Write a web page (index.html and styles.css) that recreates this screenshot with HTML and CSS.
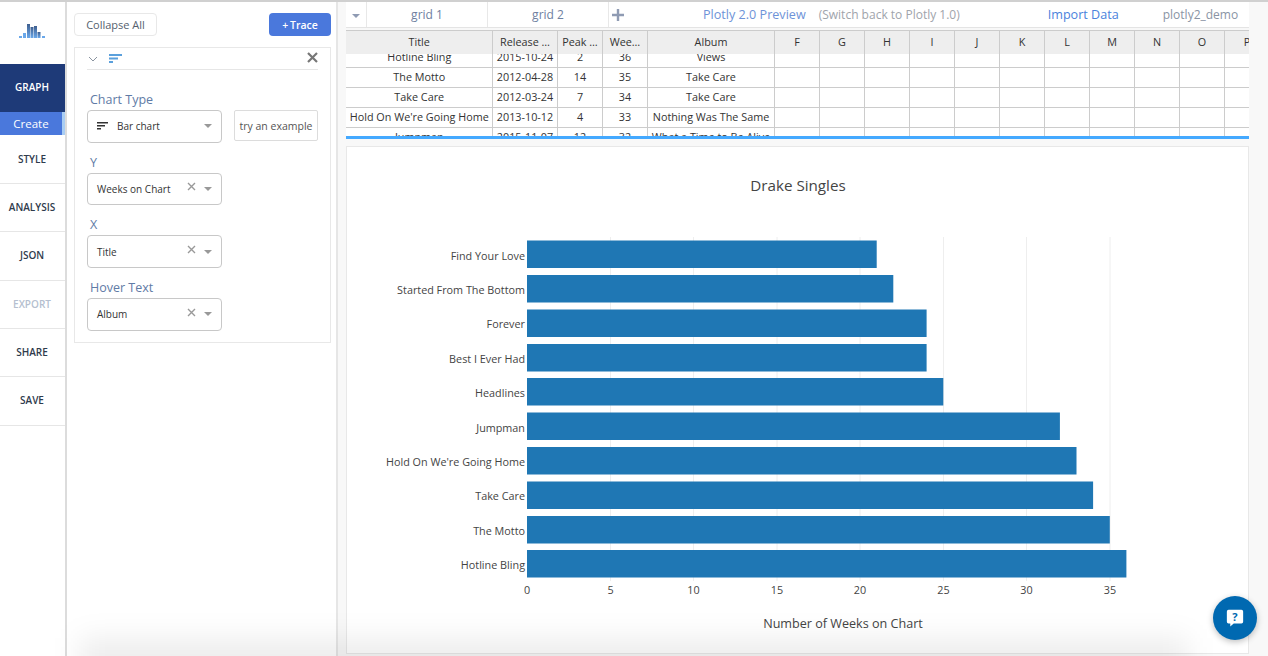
FILE: index.html
```html
<!DOCTYPE html>
<html lang="en">
<head>
<meta charset="utf-8">
<title>Plotly</title>
<link rel="stylesheet" href="styles.css">
</head>
<body>
<div class="app">
  <nav class="nav">
    <div class="logo">
      <svg width="30" height="20" viewBox="0 0 30 20">
        <defs><linearGradient id="lg" x1="0" y1="0" x2="0" y2="1"><stop offset="0" stop-color="#3f5f8f"/><stop offset="1" stop-color="#6aa8ea"/></linearGradient></defs>
        <rect x="3" y="15" width="3" height="2" fill="#6aa8ea"/>
        <rect x="7" y="12" width="3" height="5" fill="#6aa8ea"/>
        <rect x="11" y="3" width="3" height="14" fill="url(#lg)"/>
        <rect x="14.500" y="6" width="3" height="11" fill="url(#lg)"/>
        <rect x="18" y="5" width="3" height="12" fill="url(#lg)"/>
        <rect x="21.500" y="11" width="3" height="6" fill="url(#lg)"/>
        <rect x="26" y="15" width="3" height="2" fill="#6aa8ea"/>
      </svg>
    </div>
    <div class="nav-item nav-active">GRAPH</div>
    <div class="nav-sub">Create</div>
    <div class="nav-item nav-tall nav-first">STYLE</div>
    <div class="nav-item">ANALYSIS</div>
    <div class="nav-item nav-tall">JSON</div>
    <div class="nav-item nav-muted">EXPORT</div>
    <div class="nav-item">SHARE</div>
    <div class="nav-item nav-tall">SAVE</div>
  </nav>

  <aside class="panel">
    <div class="panel-top">
      <button class="btn-plain">Collapse All</button>
      <button class="btn-blue">+ Trace</button>
    </div>
    <section class="card">
      <div class="card-head">
        <svg class="chev" width="10" height="6" viewBox="0 0 10 6"><path d="M1 1l4 4 4-4" fill="none" stroke="#8a94a0" stroke-width="1"/></svg>
        <svg class="trace-icon" width="14" height="10" viewBox="0 0 14 10">
          <rect x="0" y="0" width="13" height="2" fill="#5ba0dc"/>
          <rect x="0" y="3.500" width="9" height="2" fill="#5ba0dc"/>
          <rect x="0" y="7" width="4" height="2" fill="#5ba0dc"/>
        </svg>
        <svg class="close" width="11" height="11" viewBox="0 0 11 11"><path d="M1 1l9 9M10 1l-9 9" stroke="#777" stroke-width="2.200"/></svg>
      </div>
      <div class="label">Chart Type</div>
      <div class="type-row">
        <div class="select">
          <svg class="bar-icon" width="11" height="8" viewBox="0 0 11 8">
            <rect x="0" y="0" width="11" height="1.500" fill="#333"/>
            <rect x="0" y="3" width="8" height="1.500" fill="#333"/>
            <rect x="0" y="6" width="4" height="1.500" fill="#333"/>
          </svg>
          <span class="select-text">Bar chart</span>
          <span class="caret"></span>
        </div>
        <div class="try">try an example</div>
      </div>
      <div class="label">Y</div>
      <div class="select">
        <span class="select-text">Weeks on Chart</span>
        <svg class="clear" width="9" height="9" viewBox="0 0 9 9"><path d="M1 1l7 7M8 1l-7 7" stroke="#999" stroke-width="1.400"/></svg>
        <span class="caret"></span>
      </div>
      <div class="label">X</div>
      <div class="select">
        <span class="select-text">Title</span>
        <svg class="clear" width="9" height="9" viewBox="0 0 9 9"><path d="M1 1l7 7M8 1l-7 7" stroke="#999" stroke-width="1.400"/></svg>
        <span class="caret"></span>
      </div>
      <div class="label">Hover Text</div>
      <div class="select">
        <span class="select-text">Album</span>
        <svg class="clear" width="9" height="9" viewBox="0 0 9 9"><path d="M1 1l7 7M8 1l-7 7" stroke="#999" stroke-width="1.400"/></svg>
        <span class="caret"></span>
      </div>
    </section>
  </aside>

  <main class="main">
    <header class="tabs">
      <div class="tab-menu"><span class="tab-caret"></span></div>
      <div class="tab">grid 1</div>
      <div class="tab">grid 2</div>
      <div class="tab-plus">
        <svg width="14" height="14" viewBox="0 0 14 14"><path d="M7 1v12M1 7h12" stroke="#8f9bb3" stroke-width="2.400"/></svg>
      </div>
      <a class="preview">Plotly 2.0 Preview</a>
      <span class="switch">(Switch back to Plotly 1.0)</span>
      <a class="import">Import Data</a>
      <span class="user">plotly2_demo</span>
    </header>

    <div class="sheet">
      <div class="sheet-clip">
        <table class="grid grid-body">
          <colgroup><col class="c1"><col class="c2"><col class="c3"><col class="c3"><col class="c5"><col class="c3"><col class="c3"><col class="c3"><col class="c3"><col class="c3"><col class="c3"><col class="c3"><col class="c3"><col class="c3"><col class="c3"><col class="c3"></colgroup>
          <tr><td>Hotline Bling</td><td>2015-10-24</td><td>2</td><td>36</td><td>Views</td><td></td><td></td><td></td><td></td><td></td><td></td><td></td><td></td><td></td><td></td><td></td></tr>
          <tr><td>The Motto</td><td>2012-04-28</td><td>14</td><td>35</td><td>Take Care</td><td></td><td></td><td></td><td></td><td></td><td></td><td></td><td></td><td></td><td></td><td></td></tr>
          <tr><td>Take Care</td><td>2012-03-24</td><td>7</td><td>34</td><td>Take Care</td><td></td><td></td><td></td><td></td><td></td><td></td><td></td><td></td><td></td><td></td><td></td></tr>
          <tr><td>Hold On We're Going Home</td><td>2013-10-12</td><td>4</td><td>33</td><td>Nothing Was The Same</td><td></td><td></td><td></td><td></td><td></td><td></td><td></td><td></td><td></td><td></td><td></td></tr>
          <tr><td>Jumpman</td><td>2015-11-07</td><td>12</td><td>32</td><td>What a Time to Be Alive</td><td></td><td></td><td></td><td></td><td></td><td></td><td></td><td></td><td></td><td></td><td></td></tr>
        </table>
        <table class="grid grid-head">
          <colgroup><col class="c1"><col class="c2"><col class="c3"><col class="c3"><col class="c5"><col class="c3"><col class="c3"><col class="c3"><col class="c3"><col class="c3"><col class="c3"><col class="c3"><col class="c3"><col class="c3"><col class="c3"><col class="c3"></colgroup>
          <tr><th>Title</th><th>Release …</th><th>Peak …</th><th>Wee…</th><th>Album</th><th>F</th><th>G</th><th>H</th><th>I</th><th>J</th><th>K</th><th>L</th><th>M</th><th>N</th><th>O</th><th>P</th></tr>
        </table>
      </div>
    </div>

    <section class="plot">
      <svg class="chart" width="901" height="506" viewBox="347 147 901 506">
        <g class="gridlines">
          <line x1="610.500" y1="237" x2="610.500" y2="581"/>
          <line x1="693.500" y1="237" x2="693.500" y2="581"/>
          <line x1="777" y1="237" x2="777" y2="581"/>
          <line x1="860" y1="237" x2="860" y2="581"/>
          <line x1="943.500" y1="237" x2="943.500" y2="581"/>
          <line x1="1026.500" y1="237" x2="1026.500" y2="581"/>
          <line x1="1110" y1="237" x2="1110" y2="581"/>
        </g>
        <g class="bars">
          <rect x="527" y="240.500" width="349.700" height="27.500"/>
          <rect x="527" y="275" width="366.300" height="27.500"/>
          <rect x="527" y="309.500" width="399.600" height="27.500"/>
          <rect x="527" y="344" width="399.600" height="27.500"/>
          <rect x="527" y="378" width="416.300" height="27.500"/>
          <rect x="527" y="412.500" width="532.900" height="27.500"/>
          <rect x="527" y="447" width="549.500" height="27.500"/>
          <rect x="527" y="481.500" width="566.100" height="27.500"/>
          <rect x="527" y="516" width="582.800" height="27.500"/>
          <rect x="527" y="550" width="599.400" height="27.500"/>
        </g>
        <g class="cat">
          <text x="525" y="260">Find Your Love</text>
          <text x="525" y="294">Started From The Bottom</text>
          <text x="525" y="328">Forever</text>
          <text x="525" y="363">Best I Ever Had</text>
          <text x="525" y="397">Headlines</text>
          <text x="525" y="432">Jumpman</text>
          <text x="525" y="466">Hold On We're Going Home</text>
          <text x="525" y="500">Take Care</text>
          <text x="525" y="535">The Motto</text>
          <text x="525" y="569">Hotline Bling</text>
        </g>
        <g class="tick">
          <text x="527" y="594">0</text>
          <text x="610.500" y="594">5</text>
          <text x="693.500" y="594">10</text>
          <text x="777" y="594">15</text>
          <text x="860" y="594">20</text>
          <text x="943.500" y="594">25</text>
          <text x="1026.500" y="594">30</text>
          <text x="1110" y="594">35</text>
        </g>
        <text class="chart-title" x="798" y="191">Drake Singles</text>
        <text class="axis-title" x="843" y="628">Number of Weeks on Chart</text>
      </svg>
    </section>
  </main>
  <div class="fade"></div>
  <button class="help" aria-label="Help">
    <svg width="18" height="18" viewBox="0 0 21 21">
      <path d="M3 1h15a2 2 0 0 1 2 2v12a2 2 0 0 1-2 2H9l-4 3.500V17H3a2 2 0 0 1-2-2V3a2 2 0 0 1 2-2z" fill="#fff"/>
      <text x="10.500" y="14" class="help-q">?</text>
    </svg>
  </button>
</div>
</body>
</html>
```
FILE: styles.css
```css
* { box-sizing: border-box; }
html, body { margin: 0; padding: 0; height: 100%; overflow: hidden; }
body { font-family: "Open Sans", "Liberation Sans", sans-serif; color: #333; background: #fff; }

.app { position: relative; display: flex; width: 1268px; height: 656px; border-top: 2px solid #d0d0d0; overflow: hidden; background: #fff; }

/* left nav */
.nav { width: 67px; flex: none; background: #fff; border-right: 2px solid #dcdcdc; display: flex; flex-direction: column; }
.logo { height: 62px; display: flex; align-items: flex-start; padding: 19px 0 0 16px; }
.nav-item { height: 48px; flex: none; display: flex; align-items: center; justify-content: center; padding: 0 1px 2px 0; font-size: 10px; font-weight: 600; color: #2f3b4c; border-bottom: 1px solid #e6e6e6; }
.nav-tall { height: 49px; }
.nav-first { padding-bottom: 0; }
.nav-active { background: #1e3a78; color: #fff; border-bottom: 0; }
.nav-sub { height: 23px; flex: none; display: flex; align-items: center; justify-content: center; background: #4a78dc; color: #fff; font-size: 11.500px; border-right: 3px solid #a9cdf3; }
.nav-muted { color: #b5bfcf; }

/* panel */
.panel { width: 271px; flex: none; padding: 11px 5px 0 7px; background: #fff; border-right: 2px solid #e6e6e6; }
.panel-top { display: flex; justify-content: space-between; height: 23px; }
.btn-plain, .btn-blue { font-family: inherit; height: 23px; font-size: 11px; border-radius: 4px; padding: 0; }
.btn-plain { width: 83px; background: #fff; border: 1px solid #e8e8e8; color: #555f6e; }
.btn-blue { width: 62px; background: #4a78dc; border: 0; color: #fff; font-size: 10.500px; font-weight: 600; word-spacing: -1px; }
.card { margin-top: 11px; height: 296px; border: 1px solid #e8e8e8; padding: 0 12px; }
.card-head { height: 22px; display: flex; align-items: center; border-bottom: 1px solid #e6e6e6; margin-bottom: 20px; }
.chev { margin-left: 1px; }
.trace-icon { margin-left: 11px; }
.close { margin-left: auto; margin-top: -2px; }
.label { height: 20px; margin-top: 10px; padding-left: 3px; font-size: 12.500px; line-height: 19px; color: #5f7ba6; }
.card-head + .label { margin-top: 0; }
.type-row { display: flex; align-items: flex-start; gap: 12px; }
.select { width: 135px; height: 32.670px; flex: none; display: flex; align-items: center; padding: 0 9px; border: 1px solid #c8c8c8; border-radius: 4px; background: #fff; font-size: 10px; color: #333; }
.bar-icon { margin-right: 9px; }
.select-text { flex: 1; white-space: nowrap; }
.clear { margin-top: -4px; margin-right: 8px; }
.caret { width: 0; height: 0; border-left: 4px solid transparent; border-right: 4px solid transparent; border-top: 4px solid #999; }
.try { width: 84px; height: 31px; flex: none; display: flex; align-items: center; justify-content: center; border: 1px solid #dcdcdc; border-radius: 2px; font-size: 10.500px; color: #555; white-space: nowrap; }

/* main */
.main { flex: 1; min-width: 0; background: #f8f8f8; padding-left: 8px; display: flex; flex-direction: column; position: relative; }
.tabs { width: 903px; height: 26px; flex: none; display: flex; align-items: center; background: #fff; border-bottom: 1px solid #e4e4e4; font-size: 12px; }
.tab-menu { width: 21px; height: 100%; border-right: 1px solid #e8e8e8; display: flex; align-items: center; justify-content: center; background: #fff; padding-top: 3px; }
.tab-caret { width: 0; height: 0; border-left: 4px solid transparent; border-right: 4px solid transparent; border-top: 4px solid #8f9bb3; }
.tab { width: 121px; height: 100%; display: flex; align-items: center; justify-content: center; border-right: 1px solid #e8e8e8; color: #6f7f9f; }
.tab-plus { width: 20px; display: flex; align-items: center; justify-content: center; margin-left: -1px; }
.preview { margin-left: 75px; color: #6e93d8; white-space: nowrap; font-size: 12.600px; }
.switch { margin-left: 13px; color: #a0a4ab; white-space: nowrap; }
.import { margin-left: 88px; color: #4a82dc; white-space: nowrap; font-size: 12.600px; }
.user { margin-left: 44px; color: #8a94a4; white-space: nowrap; }

.sheet { width: 903px; flex: none; margin-top: 2px; height: 109px; border-bottom: 3px solid #44a9ff; background: #fff; }
.sheet-clip { position: relative; height: 106px; overflow: hidden; }
.grid { border-collapse: collapse; table-layout: fixed; width: 923px; font-size: 10.800px; color: #333; }
.c1 { width: 146px; } .c2 { width: 65px; } .c3 { width: 45px; } .c5 { width: 127px; }
.grid th, .grid td { text-align: center; padding: 0 0 2px 1px; white-space: nowrap; overflow: hidden; border: 1px solid #ccc; border-left: 0; font-weight: 400; }
.grid-body { position: relative; top: 17px; }
.grid-body td { height: 20px; }
.grid-body tr:first-child td { border-top: 0; padding-bottom: 0; }
.grid-head { position: absolute; left: 0; top: 0; background: #eee; }
.grid-head th { height: 23px; border-bottom: 0; border-top: 1px solid #ccc; }

/* chart */
.plot { width: 903px; height: 508px; flex: none; margin-top: 7px; background: #fff; border: 1px solid #e8e8e8; }
.chart { display: block; }
.gridlines line { stroke: #eee; stroke-width: 1; }
.bars rect { fill: #1f77b4; }
.chart text { font-family: "Open Sans", "Liberation Sans", sans-serif; fill: #444; }
.cat text { font-size: 10.800px; text-anchor: end; }
.tick text { font-size: 10.800px; text-anchor: middle; }
.chart .chart-title { font-size: 15.200px; text-anchor: middle; }
.chart .axis-title { font-size: 12.600px; text-anchor: middle; }

/* overlays */
.fade { position: absolute; left: 80px; right: 80px; bottom: -24px; height: 42px; pointer-events: none; background: rgba(0,0,0,.07); filter: blur(14px); }
.help { position: absolute; left: 1213px; top: 594px; width: 44px; height: 44px; padding: 0; border: 0; border-radius: 50%; background: #0069b1; box-shadow: 0 2px 6px rgba(0,0,0,.25); display: flex; align-items: center; justify-content: center; }
.help-q { font-family: "Open Sans", sans-serif; font-size: 13px; font-weight: 700; fill: #0069b1; text-anchor: middle; }
```
